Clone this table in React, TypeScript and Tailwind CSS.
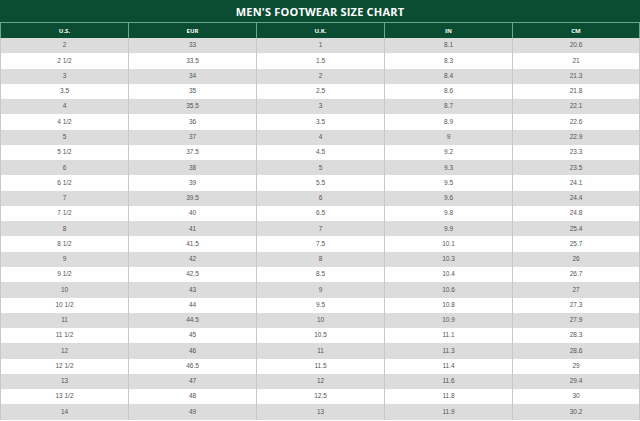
import React from "react";

const rows: string[][] = [
  ["2", "33", "1", "8.1", "20.6"],
  ["2 1/2", "33.5", "1.5", "8.3", "21"],
  ["3", "34", "2", "8.4", "21.3"],
  ["3.5", "35", "2.5", "8.6", "21.8"],
  ["4", "35.5", "3", "8.7", "22.1"],
  ["4 1/2", "36", "3.5", "8.9", "22.6"],
  ["5", "37", "4", "9", "22.9"],
  ["5 1/2", "37.5", "4.5", "9.2", "23.3"],
  ["6", "38", "5", "9.3", "23.5"],
  ["6 1/2", "39", "5.5", "9.5", "24.1"],
  ["7", "39.5", "6", "9.6", "24.4"],
  ["7 1/2", "40", "6.5", "9.8", "24.8"],
  ["8", "41", "7", "9.9", "25.4"],
  ["8 1/2", "41.5", "7.5", "10.1", "25.7"],
  ["9", "42", "8", "10.3", "26"],
  ["9 1/2", "42.5", "8.5", "10.4", "26.7"],
  ["10", "43", "9", "10.6", "27"],
  ["10 1/2", "44", "9.5", "10.8", "27.3"],
  ["11", "44.5", "10", "10.9", "27.9"],
  ["11 1/2", "45", "10.5", "11.1", "28.3"],
  ["12", "46", "11", "11.3", "28.6"],
  ["12 1/2", "46.5", "11.5", "11.4", "29"],
  ["13", "47", "12", "11.6", "29.4"],
  ["13 1/2", "48", "12.5", "11.8", "30"],
  ["14", "49", "13", "11.9", "30.2"],
];

const headers = ["U.S.", "EUR", "U.K.", "IN", "CM"];

export default function App() {
  return (
    <div
      className="w-[640px] h-[421px] overflow-hidden bg-white"
      style={{ fontFamily: '"Open Sans", "Liberation Sans", sans-serif' }}
    >
      <div className="h-[22px] bg-[#0b4d33] flex items-center justify-center">
        <span className="text-white font-bold text-[11px] tracking-[0.2px] leading-none">
          MEN'S FOOTWEAR SIZE CHART
        </span>
      </div>
      <div className="bg-[#0b4d33] border-t border-[#6aa88a] grid grid-cols-5 h-[16px]">
        {headers.map((h, i) => (
          <div
            key={h}
            className={`flex items-center justify-center text-white font-bold text-[6px] leading-none border-l border-[#6aa88a] ${
              i === 4 ? "border-r" : ""
            }`}
          >
            {h}
          </div>
        ))}
      </div>
      {rows.map((r, ri) => (
        <div
          key={ri}
          className={`grid grid-cols-5 h-[15.28px] ${
            ri % 2 === 0 ? "bg-[#dcdcdc]" : "bg-white"
          }`}
        >
          {r.map((c, ci) => (
            <div
              key={ci}
              className={`flex items-center justify-center text-[6.5px] leading-none text-[#555] border-l border-[#c8c8c8] ${
                ci === 4 ? "border-r" : ""
              }`}
              style={{ fontFamily: '"Liberation Sans", Arial, sans-serif' }}
            >
              {c}
            </div>
          ))}
        </div>
      ))}
    </div>
  );
}
